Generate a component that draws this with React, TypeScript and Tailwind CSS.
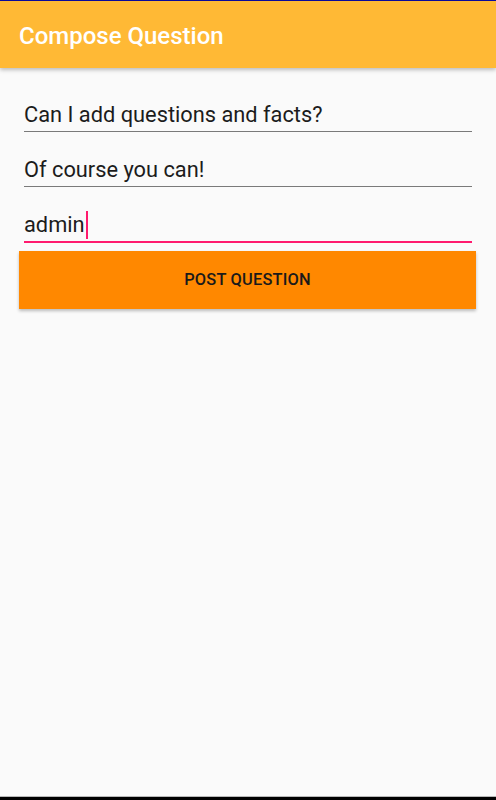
export default function App() {
  const fields = [
    { value: "Can I add questions and facts?", focused: false },
    { value: "Of course you can!", focused: false },
    { value: "admin", focused: true },
  ];

  return (
    <div className="flex h-[800px] w-[496px] flex-col bg-[#fafafa] font-['Roboto',sans-serif]">
      {/* status line */}
      <div className="h-px bg-[#0a0aa0]" />

      {/* app bar */}
      <div className="relative z-10 flex h-[67px] items-center bg-[#ffb935] px-[19px] pt-[3px] shadow-[0_2px_4px_rgba(0,0,0,0.25)]">
        <h1 className="text-[24px] font-medium text-white">Compose Question</h1>
      </div>

      {/* form */}
      <div className="flex-1 pt-[9px]">
        <div className="px-6">
          {fields.map((f, i) => (
            <div
              key={i}
              className={`mt-[27px] pb-[5px] ${
                f.focused ? "border-b-2 border-[#ff1a6e]" : "border-b border-[#7a7a7a]"
              }`}
            >
              <div className="flex h-[22px] items-center text-[21.8px] leading-[22px] text-[#1c1c1c]">
                {f.value}
                {f.focused && <span className="ml-px h-[28px] w-[2px] bg-[#ff1a6e]" />}
              </div>
            </div>
          ))}
        </div>

        <button className="ml-[19px] mt-[8px] flex h-[58px] w-[457px] items-center justify-center bg-[#ff8800] pt-px text-[16.4px] font-medium tracking-[0.2px] text-[#1a1a1a] shadow-[0_2px_3px_rgba(0,0,0,0.25)]">
          POST QUESTION
        </button>
      </div>

      {/* nav bar edge */}
      <div className="h-px bg-[#b8b8b8]" />
      <div className="h-[3px] bg-black" />
    </div>
  );
}
